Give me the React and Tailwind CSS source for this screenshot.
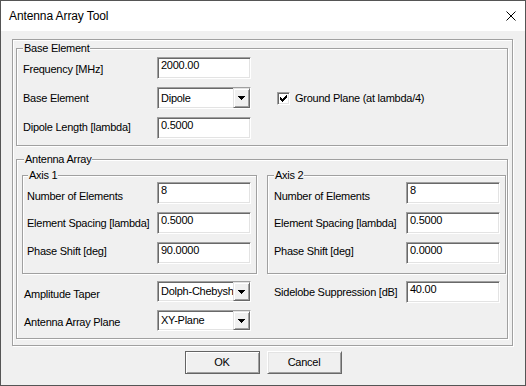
import React from "react";

const ETCH = "border border-[#a0a0a0] shadow-[inset_1px_1px_0_#ffffff,1px_1px_0_#ffffff]";
const SUNKEN =
  "border border-t-[#a0a0a0] border-l-[#a0a0a0] border-b-[#ffffff] border-r-[#ffffff] shadow-[inset_1px_1px_0_#696969,inset_-1px_-1px_0_#e3e3e3] bg-white";

function Group({ title, className, titleClass, children }) {
  return (
    <div className={`relative ${ETCH} ${className}`}>
      <span className={`absolute -top-[7px] ${titleClass} bg-[#f0f0f0] px-[1px] leading-[13px] whitespace-nowrap`}>
        {title}
      </span>
      {children}
    </div>
  );
}

function Input({ value }) {
  return (
    <div className={`${SUNKEN} w-[94px] h-[22px] pl-[3px] pt-[1px] leading-[13px] whitespace-nowrap overflow-hidden`}>
      {value}
    </div>
  );
}

function Arrow() {
  return (
    <svg width="7" height="4" viewBox="0 0 7 4" shapeRendering="crispEdges">
      <path d="M0 0h7v1h-1v1h-1v1h-1v1h-1v-1h-1v-1h-1v-1h-1z" fill="#000000" />
    </svg>
  );
}

function Combo({ value, h }) {
  return (
    <div className={`${SUNKEN} w-[94px] ${h} flex`}>
      <div className="flex-1 min-w-0 overflow-hidden whitespace-nowrap pl-[3px] flex items-center leading-[13px]">
        {value}
      </div>
      <div className="w-[17px] h-full shrink-0 bg-[#f0f0f0] border border-t-[#e3e3e3] border-l-[#e3e3e3] border-b-[#696969] border-r-[#696969] shadow-[inset_1px_1px_0_#ffffff,inset_-1px_-1px_0_#a0a0a0] flex items-center justify-center">
        <Arrow />
      </div>
    </div>
  );
}

function Check() {
  const rects = [
    [6, 0, 1],
    [5, 1, 2],
    [0, 2, 1],
    [4, 2, 3],
    [0, 3, 2],
    [3, 3, 3],
    [0, 4, 5],
    [1, 5, 3],
    [2, 6, 1],
  ];
  return (
    <div className={`${SUNKEN} w-[13px] h-[13px] shrink-0 relative`}>
      <svg className="absolute left-[2px] top-[2px]" width="7" height="7" viewBox="0 0 7 7" shapeRendering="crispEdges">
        {rects.map(([x, y, w], i) => (
          <rect key={i} x={x} y={y} width={w} height="1" fill="#000000" />
        ))}
      </svg>
    </div>
  );
}

function Row({ label, labelW, pt, children }) {
  return (
    <div className="flex items-start">
      <div className={`${labelW} ${pt} leading-[13px] whitespace-nowrap shrink-0`}>{label}</div>
      {children}
    </div>
  );
}

export default function App() {
  return (
    <div className="w-[526px] h-[386px] bg-[#f0f0f0] border border-[#555555] flex flex-col font-['Liberation_Sans',Arial,sans-serif] text-black text-[11px] tracking-[-0.25px] leading-[13px] overflow-hidden">
      {/* Title bar */}
      <div className="h-[30px] shrink-0 bg-white flex items-center justify-between pl-[8px] pr-[9px]">
        <span className="text-[12px] tracking-[-0.1px]">Antenna Array Tool</span>
        <svg width="10" height="10" viewBox="0 0 10 10">
          <path d="M0.5 0.5L9.5 9.5M9.5 0.5L0.5 9.5" stroke="#000000" strokeWidth="1" />
        </svg>
      </div>

      {/* Body */}
      <div className="pt-[8px] pl-[11px]">
        <div className={`${ETCH} w-[501px] h-[307px] px-[3px] pt-[8px]`}>
          {/* Base Element */}
          <Group title="Base Element" className="w-[492px] h-[98px] pt-[8px] pl-[6px]" titleClass="left-[6px]">
            <div className="flex flex-col gap-[8px]">
              <Row label="Frequency [MHz]" labelW="w-[134px]" pt="pt-[6px]">
                <Input value="2000.00" />
              </Row>
              <Row label="Base Element" labelW="w-[134px]" pt="pt-[5px]">
                <Combo value="Dipole" h="h-[22px]" />
                <div className="ml-[26px] h-[22px] flex items-center gap-[5px]">
                  <Check />
                  <span className="whitespace-nowrap">Ground Plane (at lambda/4)</span>
                </div>
              </Row>
              <Row label="Dipole Length [lambda]" labelW="w-[134px]" pt="pt-[4px]">
                <Input value="0.5000" />
              </Row>
            </div>
          </Group>

          {/* Antenna Array */}
          <Group title="Antenna Array" className="mt-[13px] w-[492px] h-[180px] pt-[15px] pl-[5px]" titleClass="left-[7px]">
            <div className="flex gap-[10px]">
              <Group title="Axis 1" className="w-[235px] h-[99px] pt-[6px] pl-[4px]" titleClass="left-[5px]">
                <div className="flex flex-col gap-[8px]">
                  <Row label="Number of Elements" labelW="w-[130px]" pt="pt-[8px]">
                    <Input value="8" />
                  </Row>
                  <Row label="Element Spacing [lambda]" labelW="w-[130px]" pt="pt-[5px]">
                    <Input value="0.5000" />
                  </Row>
                  <Row label="Phase Shift [deg]" labelW="w-[130px]" pt="pt-[3px]">
                    <Input value="90.0000" />
                  </Row>
                </div>
              </Group>
              <Group title="Axis 2" className="w-[239px] h-[99px] pt-[6px] pl-[6px]" titleClass="left-[6px]">
                <div className="flex flex-col gap-[8px]">
                  <Row label="Number of Elements" labelW="w-[132px]" pt="pt-[8px]">
                    <Input value="8" />
                  </Row>
                  <Row label="Element Spacing [lambda]" labelW="w-[132px]" pt="pt-[5px]">
                    <Input value="0.5000" />
                  </Row>
                  <Row label="Phase Shift [deg]" labelW="w-[132px]" pt="pt-[3px]">
                    <Input value="0.0000" />
                  </Row>
                </div>
              </Group>
            </div>

            <div className="mt-[7px] pl-[2px] flex flex-col gap-[7px]">
              <div className="flex items-start">
                <Row label="Amplitude Taper" labelW="w-[133px]" pt="pt-[7px]">
                  <Combo value="Dolph-Chebyshev" h="h-[21px]" />
                </Row>
                <div className="ml-[23px]">
                  <Row label="Sidelobe Suppression [dB]" labelW="w-[132px]" pt="pt-[5px]">
                    <Input value="40.00" />
                  </Row>
                </div>
              </div>
              <Row label="Antenna Array Plane" labelW="w-[133px]" pt="pt-[6px]">
                <Combo value="XY-Plane" h="h-[21px]" />
              </Row>
            </div>
          </Group>
        </div>
      </div>

      {/* Buttons */}
      <div className="mt-[5px] flex justify-center gap-[7px]">
        <button className="w-[75px] h-[23px] bg-[#f0f0f0] border border-[#646464] shadow-[inset_1px_1px_0_#ffffff,inset_-1px_-1px_0_#a0a0a0] flex items-center justify-center leading-[13px]">
          OK
        </button>
        <button className="w-[75px] h-[23px] bg-[#f0f0f0] border border-t-[#ffffff] border-l-[#ffffff] border-b-[#696969] border-r-[#696969] shadow-[inset_1px_1px_0_#e3e3e3,inset_-1px_-1px_0_#a0a0a0] flex items-center justify-center leading-[13px]">
          Cancel
        </button>
      </div>
    </div>
  );
}
